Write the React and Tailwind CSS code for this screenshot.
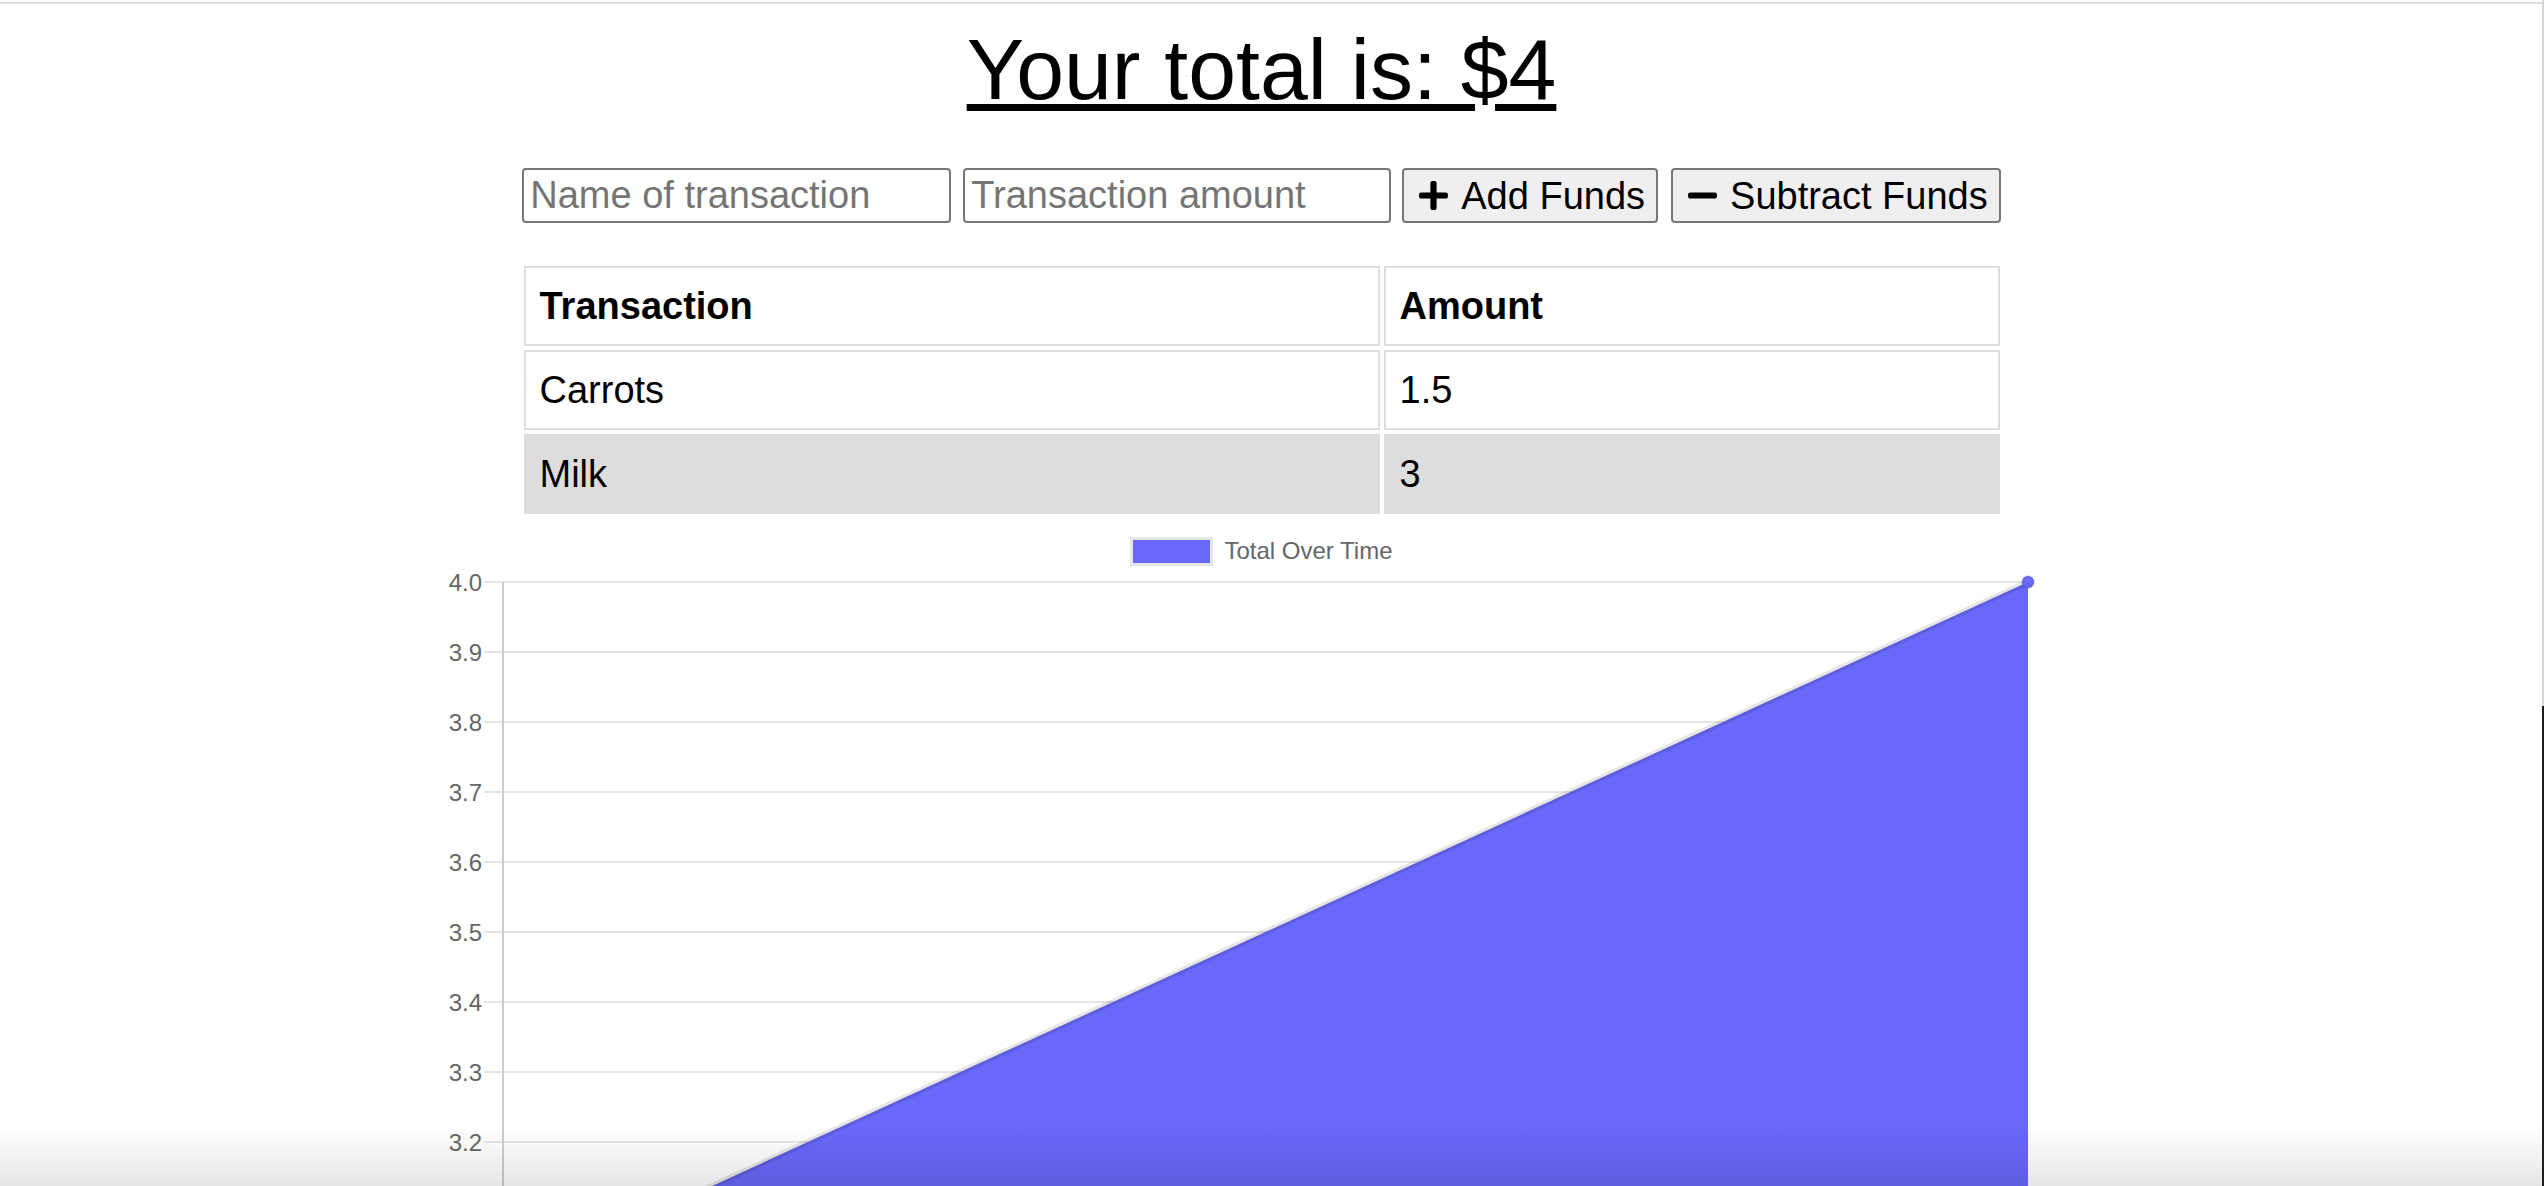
import React from 'react'
import { FaPlus, FaMinus } from 'react-icons/fa'

const ROWS = [
  { name: 'Carrots', amount: '1.5' },
  { name: 'Milk', amount: '3' }
]

const TICKS = ['4.0', '3.9', '3.8', '3.7', '3.6', '3.5', '3.4', '3.3', '3.2', '3.1', '3.0']

function TotalChart() {
  // plot area inside the svg: axis at x=62, last point at x=1587, 70px per 0.1
  return (
    <svg width="1641" height="720" className="block self-center" style={{ fontFamily: '"Liberation Sans", Arial, sans-serif' }}>
      {TICKS.map((t, i) => (
        <g key={t}>
          <line x1="43" x2="1587" y1={11 + i * 70} y2={11 + i * 70} stroke="#e5e5e5" strokeWidth="2" />
          <text x="41" y={11 + i * 70} textAnchor="end" dominantBaseline="central" fontSize="24" fill="#666666">{t}</text>
        </g>
      ))}
      <line x1="62" x2="62" y1="11" y2="720" stroke="#cccccc" strokeWidth="2" />
      <polygon points="62,711 1587,11 1587,711" fill="#6868fa" />
      <line x1="62" y1="711" x2="1587" y2="11" stroke="rgba(0,0,0,0.1)" strokeWidth="6" />
      <circle cx="1587" cy="11" r="6" fill="#6868fa" stroke="rgba(0,0,0,0.1)" strokeWidth="2" />
    </svg>
  )
}

export default function App() {
  return (
    <div className="relative h-screen overflow-hidden bg-white text-black" style={{ fontFamily: '"Liberation Sans", Arial, Helvetica, sans-serif' }}>
      <div className="h-[2px]" />
      <div className="h-[2px] bg-[#dcdbe0]" />

      <div className="w-[2523px] flex flex-col items-center">
        <h1 className="mt-[16px] text-[86px] leading-[98px] font-normal underline decoration-[7px] underline-offset-[5px]">
          Your total is: $4
        </h1>

        {/* add / subtract form */}
        <form className="mt-[50px] flex items-center" onSubmit={(e) => e.preventDefault()}>
          <input
            type="text"
            placeholder="Name of transaction"
            className="w-[429px] h-[55px] border-2 border-[#767676] rounded-[4px] px-[6px] text-[38px] placeholder:text-[#757575] outline-none"
          />
          <input
            type="number"
            placeholder="Transaction amount"
            className="ml-[12px] w-[428px] h-[55px] border-2 border-[#767676] rounded-[4px] px-[6px] text-[38px] placeholder:text-[#757575] outline-none"
          />
          <button className="ml-[11px] h-[55px] flex items-center gap-[11px] border-2 border-[#767676] rounded-[4px] bg-[#efefef] pl-[13px] pr-[11px] text-[38px] leading-none">
            <FaPlus size={33} />
            <span>Add Funds</span>
          </button>
          <button className="ml-[13px] h-[55px] flex items-center gap-[11px] border-2 border-[#767676] rounded-[4px] bg-[#efefef] pl-[13px] pr-[11px] text-[38px] leading-none">
            <FaMinus size={33} />
            <span>Subtract Funds</span>
          </button>
        </form>

        {/* transactions table */}
        <div className="mt-[43px] grid grid-cols-[856px_616px] auto-rows-[80px] gap-[4px] text-[38px]">
          <div className="border-2 border-[#dddddd] flex items-center pl-[14px] font-bold">Transaction</div>
          <div className="border-2 border-[#dddddd] flex items-center pl-[14px] font-bold">Amount</div>
          {ROWS.map((row, i) => (
            <React.Fragment key={row.name}>
              <div className={`border-2 border-[#dddddd] flex items-center pl-[14px] ${i % 2 === 1 ? 'bg-[#dddddd]' : ''}`}>{row.name}</div>
              <div className={`border-2 border-[#dddddd] flex items-center pl-[14px] ${i % 2 === 1 ? 'bg-[#dddddd]' : ''}`}>{row.amount}</div>
            </React.Fragment>
          ))}
        </div>

        {/* chart legend */}
        <div className="mt-[19px] flex items-center gap-[11px]">
          <div className="w-[83px] h-[29px] border-[3px] border-[#e6e6e6] bg-[#6868fa]" />
          <span className="text-[24px] text-[#666666]">Total Over Time</span>
        </div>

        <div className="mt-[2px] self-stretch flex justify-center">
          <TotalChart />
        </div>
      </div>

      {/* window edge shading */}
      <div className="pointer-events-none absolute left-0 right-0 bottom-0 h-[60px] bg-linear-to-b from-transparent to-black/10" />
      <div className="absolute right-0 top-0 h-[706px] w-[2px] bg-[#d4d4d4]" />
      <div className="absolute right-0 top-[706px] bottom-0 w-[2px] bg-[#1e1e1e]" />
    </div>
  )
}
